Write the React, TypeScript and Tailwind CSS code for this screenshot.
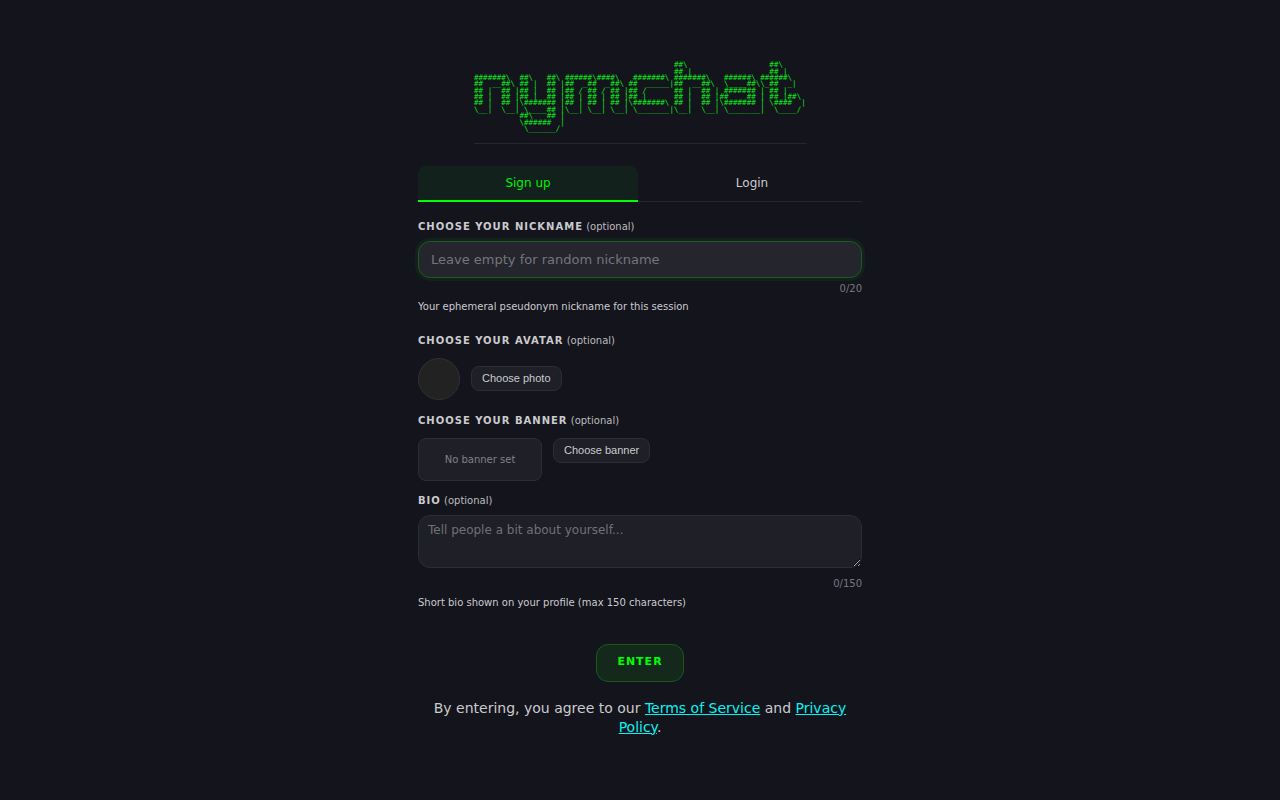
import React, { useState } from 'react';

const LOGO_LINES = [
  '                                            ##\\                  ##\\',
  '                                            ## |                 ## |',
  '#######\\  ##\\   ##\\ ######\\####\\   #######\\ #######\\   ######\\ ######\\',
  '##  __##\\ ## |  ## |##  _##  _##\\ ##  _____|##  __##\\  \\____##\\\\_##  _|',
  '## |  ## |## |  ## |## / ## / ## |## /      ## |  ## | ####### | ## |',
  '## |  ## |## |  ## |## | ## | ## |## |      ## |  ## |##  __## | ## |##\\',
  '## |  ## |\\####### |## | ## | ## |\\#######\\ ## |  ## |\\####### | \\####  |',
  '\\__|  \\__| \\____## |\\__| \\__| \\__| \\_______|\\__|  \\__| \\_______|  \\____/',
  '          ##\\   ## |',
  '          \\######  |',
  '           \\______/',
];

const Logo: React.FC = () => (
  <div className="mx-auto w-3/4 border-b border-[#26272e] pb-[9px]">
    <svg viewBox="0 0 440 96" className="block w-full overflow-visible" role="img" aria-label="nymchat">
      {LOGO_LINES.map((line, i) => (
        <text
          key={i}
          x="0"
          y={8.4 + i * 8.4}
          fill="#08e41a"
          fontSize="10"
          xmlSpace="preserve"
          className="whitespace-pre font-['DejaVu_Sans_Mono',monospace]"
        >
          {line}
        </text>
      ))}
    </svg>
  </div>
);

interface FieldLabelProps {
  htmlFor: string;
  children: React.ReactNode;
}

const FieldLabel: React.FC<FieldLabelProps> = ({ htmlFor, children }) => (
  <label htmlFor={htmlFor} className="block text-[10px] leading-[13px]">
    <span className="font-bold uppercase tracking-[1px] text-[#cbcbcd]">{children}</span>{' '}
    <span className="text-[#bcbcbe]">(optional)</span>
  </label>
);

const pickButtonClass =
  "rounded-lg border border-[#2c2d35] bg-[#1e1f27] px-[10px] font-['Liberation_Sans',sans-serif] text-[11px] leading-[23px] text-[#cbcbcd]";

export default function App() {
  const [tab, setTab] = useState<'signup' | 'login'>('signup');
  const [nickname, setNickname] = useState('');
  const [bio, setBio] = useState('');

  const tabClass = (active: boolean) =>
    `flex-1 rounded-t-lg text-xs leading-[34px] border-b-2 -mb-px ${
      active ? 'border-[#00ff00] bg-[#13211d] text-[#00f000]' : 'border-transparent text-[#cbcbcd]'
    }`;

  return (
    <div className="min-h-screen bg-[#14141d] px-4 pt-[61px] pb-12 font-['DejaVu_Sans',sans-serif] text-[#cbcbcd]">
      <main className="mx-auto max-w-[444px]">
        <Logo />

        <div role="tablist" className="mt-[22px] flex gap-1 border-b border-[#26272e]">
          <button type="button" role="tab" aria-selected={tab === 'signup'} onClick={() => setTab('signup')} className={tabClass(tab === 'signup')}>
            Sign up
          </button>
          <button type="button" role="tab" aria-selected={tab === 'login'} onClick={() => setTab('login')} className={tabClass(tab === 'login')}>
            Login
          </button>
        </div>

        <form onSubmit={(e) => e.preventDefault()}>
          <div className="mt-[18px]">
            <FieldLabel htmlFor="nickname">Choose your nickname</FieldLabel>
            <input
              id="nickname"
              type="text"
              maxLength={20}
              value={nickname}
              onChange={(e) => setNickname(e.target.value)}
              placeholder="Leave empty for random nickname"
              className="mt-2 block h-[37px] w-full rounded-xl border border-[#1c5a26] bg-[#25252e] px-3 text-[13px] text-[#cbcbcd] shadow-[0_0_0_3px_#12221b] outline-none placeholder:text-[#757579]"
            />
            <div className="mt-1 text-right text-[10px] leading-[13px] text-[#77787d]">{nickname.length}/20</div>
            <p className="mt-1 text-[10px] leading-[15px]">Your ephemeral pseudonym nickname for this session</p>
          </div>

          <div className="mt-5">
            <FieldLabel htmlFor="avatar">Choose your avatar</FieldLabel>
            <div className="mt-[11px] flex items-center gap-[11px]">
              <div className="size-[42px] rounded-full border border-[#303036] bg-[#222222]" />
              <button id="avatar" type="button" className={pickButtonClass}>
                Choose photo
              </button>
            </div>
          </div>

          <div className="mt-[14px]">
            <FieldLabel htmlFor="banner">Choose your banner</FieldLabel>
            <div className="mt-[11px] flex items-start gap-[11px]">
              <div className="flex h-[43px] w-[124px] items-center justify-center rounded-lg border border-[#2c2d35] bg-[#1e1f27] text-[10px] text-[#818187]">
                No banner set
              </div>
              <button id="banner" type="button" className={pickButtonClass}>
                Choose banner
              </button>
            </div>
          </div>

          <div className="mt-[13px]">
            <FieldLabel htmlFor="bio">Bio</FieldLabel>
            <textarea
              id="bio"
              maxLength={150}
              value={bio}
              onChange={(e) => setBio(e.target.value)}
              placeholder="Tell people a bit about yourself..."
              className="mt-2 block h-[53px] w-full resize-y rounded-xl border border-[#2c2d35] bg-[#1e1f27] px-[9px] py-[7px] text-xs leading-[15px] text-[#cbcbcd] outline-none placeholder:text-[#707176]"
            />
            <div className="mt-2 text-right text-[10px] leading-[15px] text-[#77787d]">{bio.length}/150</div>
            <p className="mt-1 text-[10px] leading-[15px]">Short bio shown on your profile (max 150 characters)</p>
          </div>

          <div className="mt-[34px] text-center">
            <button
              type="submit"
              className="h-[38px] rounded-xl border border-[#145a1c] bg-[#14291c] px-5 text-[11px] font-bold uppercase tracking-[1px] text-[#00ff00]"
            >
              Enter
            </button>
          </div>
        </form>

        <p className="mt-[17px] px-2 text-center text-[14px] leading-[19px]">
          By entering, you agree to our{' '}
          <a href="#terms" className="text-[#0cf0f0] underline">
            Terms of Service
          </a>{' '}
          and{' '}
          <a href="#privacy" className="text-[#0cf0f0] underline">
            Privacy Policy
          </a>
          .
        </p>
      </main>
    </div>
  );
}
